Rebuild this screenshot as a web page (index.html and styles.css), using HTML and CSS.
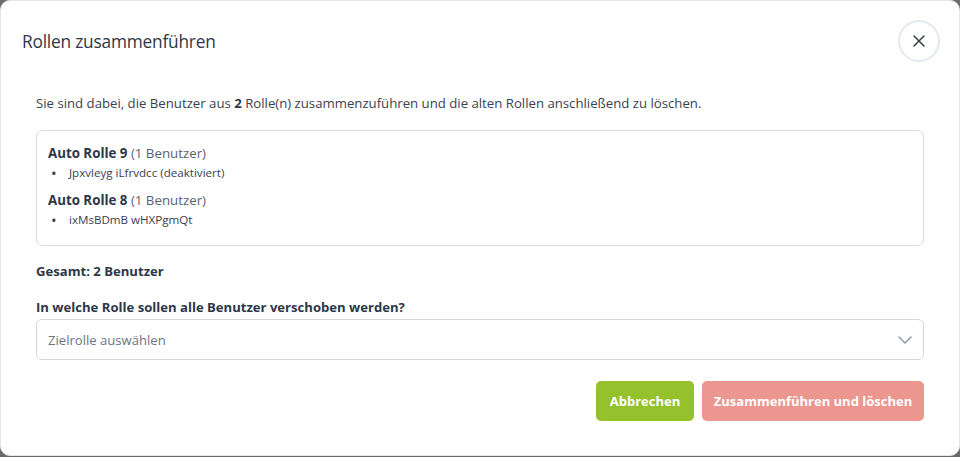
FILE: index.html
```html
<!DOCTYPE html>
<html lang="de">
<head>
<meta charset="utf-8">
<title>Rollen zusammenführen</title>
<link rel="stylesheet" href="styles.css">
</head>
<body>
<div class="modal">
  <header class="modal-header">
    <h2 class="modal-title">Rollen zusammenführen</h2>
    <button class="close-btn" aria-label="Schließen">
      <svg width="12" height="12" viewBox="0 0 12 12"><path d="M1 1L11 11M11 1L1 11" stroke="#3a3f47" stroke-width="1.5" stroke-linecap="round"/></svg>
    </button>
  </header>
  <div class="modal-body">
    <p class="intro">Sie sind dabei, die Benutzer aus <strong>2</strong> Rolle(n) zusammenzuführen und die alten Rollen anschließend zu löschen.</p>
    <div class="role-box">
      <div class="role">
        <div class="role-name"><strong>Auto Rolle 9</strong> <span class="count">(1 Benutzer)</span></div>
        <ul class="users"><li>Jpxvleyg iLfrvdcc (deaktiviert)</li></ul>
      </div>
      <div class="role">
        <div class="role-name"><strong>Auto Rolle 8</strong> <span class="count">(1 Benutzer)</span></div>
        <ul class="users"><li>ixMsBDmB wHXPgmQt</li></ul>
      </div>
    </div>
    <div class="total">Gesamt: 2 Benutzer</div>
    <label class="field-label">In welche Rolle sollen alle Benutzer verschoben werden?</label>
    <div class="select">
      <span class="placeholder">Zielrolle auswählen</span>
      <svg width="14" height="8" viewBox="0 0 14 8"><path d="M1 1L7 7L13 1" fill="none" stroke="#8a94a6" stroke-width="1.4" stroke-linecap="round" stroke-linejoin="round"/></svg>
    </div>
    <div class="actions">
      <button class="btn btn-cancel">Abbrechen</button>
      <button class="btn btn-danger">Zusammenführen und löschen</button>
    </div>
  </div>
</div>
</body>
</html>
```
FILE: styles.css
```css
html, body {
  margin: 0;
  padding: 0;
  height: 100%;
}
body {
  background: #6b6b6b;
  font-family: "Open Sans", "Noto Sans", sans-serif;
  color: #2d3748;
}
.modal {
  box-sizing: border-box;
  width: 960px;
  height: 456px;
  background: #fff;
  border: 1px solid #e3e6ee;
  border-radius: 10px;
  display: flex;
  flex-direction: column;
}
.modal-header {
  display: flex;
  align-items: center;
  justify-content: space-between;
  padding: 19px 19px 0 21px;
}
.modal-title {
  margin: 0;
  font-size: 17.3px;
  font-weight: 400;
  color: #2d3748;
  letter-spacing: -0.2px;
}
.close-btn {
  width: 42px;
  height: 42px;
  border-radius: 50%;
  border: 2px solid #e2e8f0;
  background: #fff;
  display: flex;
  align-items: center;
  justify-content: center;
  padding: 0;
}
.modal-body {
  padding: 31px 35px 0 35px;
}
.intro {
  margin: 0 0 17px;
  font-size: 13.2px;
  color: #3a4150;
  line-height: 20px;
}
.intro strong { font-weight: 700; color: #2d3748; }
.role-box {
  border: 1px solid #d7dce4;
  border-radius: 6px;
  padding: 12px 11px 16px;
  display: flex;
  flex-direction: column;
  gap: 8px;
}
.role-name {
  font-size: 13.3px;
  line-height: 21px;
}
.role-name strong { font-weight: 700; color: #2d3748; }
.count { color: #596273; }
.users {
  margin: 0;
  padding: 0;
  list-style: none;
  font-size: 11.6px;
  line-height: 18px;
  color: #3a4150;
}
.users li {
  display: flex;
}
.users li::before {
  content: "•";
  width: 18px;
  padding-left: 3px;
  flex: none;
  font-size: 15px;
  line-height: 18px;
}
.total {
  margin-top: 15px;
  font-size: 13.1px;
  font-weight: 700;
  line-height: 20px;
}
.field-label {
  display: block;
  margin-top: 16px;
  font-size: 13.1px;
  font-weight: 700;
  line-height: 20px;
}
.select {
  box-sizing: border-box;
  margin-top: 2px;
  height: 41px;
  border: 1px solid #d2d7e0;
  border-radius: 6px;
  display: flex;
  align-items: center;
  justify-content: space-between;
  padding: 0 11px 0 11px;
}
.placeholder {
  font-size: 13.1px;
  color: #6b7586;
}
.actions {
  display: flex;
  justify-content: flex-end;
  gap: 8px;
  margin-top: 21px;
}
.btn {
  height: 40px;
  border: none;
  border-radius: 5px;
  color: #fff;
  font-family: inherit;
  font-size: 13px;
  font-weight: 700;
  padding: 0;
  white-space: nowrap;
}
.btn-cancel { background: #95c12c; width: 98px; }
.btn-danger { background: #ec9690; width: 222px; }
```
